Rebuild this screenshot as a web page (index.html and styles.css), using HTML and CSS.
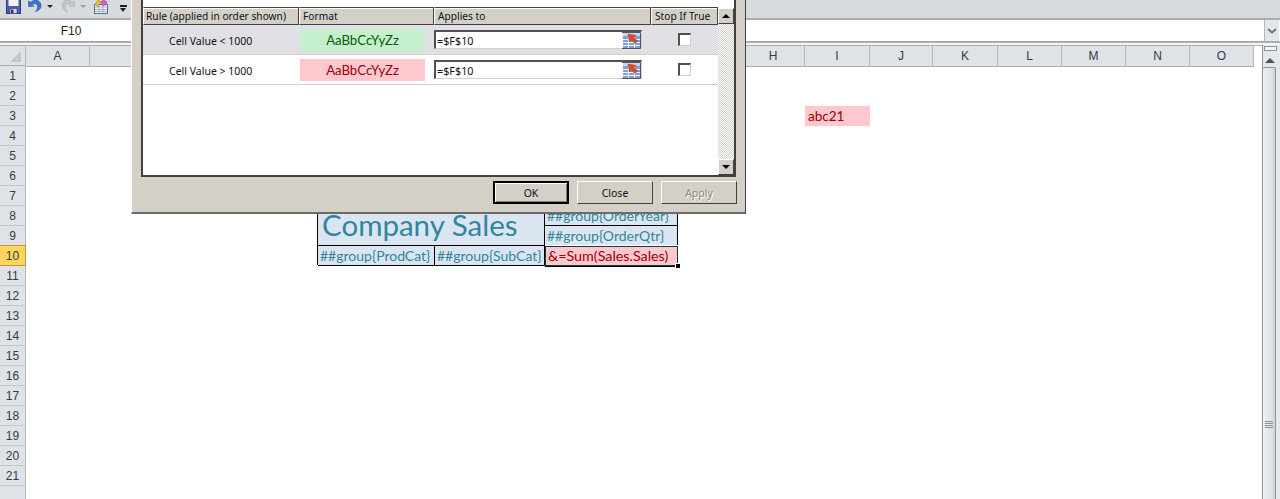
FILE: index.html
```html
<!DOCTYPE html>
<html lang="en">
<head>
    <meta charset="UTF-8">
    <title>Conditional Formatting Rules</title>
    <link rel="stylesheet" href="styles.css">
</head>
<body>
    <div class="app">
        <!-- Quick access toolbar -->
        <div class="toolbar">
            <svg class="qa-save" width="15" height="14" viewBox="0 0 15 14">
                <rect x="0.5" y="-2" width="14" height="15.5" fill="#4a5fb0" stroke="#2b3a80"/>
                <rect x="2.500" y="-2" width="10" height="8" fill="#f2f4fa"/>
                <rect x="4" y="8.500" width="7" height="5" fill="#d5d9e3" stroke="#333d70" stroke-width="0.6"/>
                <rect x="5" y="9.500" width="2.500" height="3.500" fill="#2f3768"/>
            </svg>
            <svg class="qa-undo" width="14" height="12" viewBox="0 0 14 12">
                <path d="M0.500 1v5.500h5.500L4.200 4.700C6 3.200 8.600 3.400 9.400 5.600 10 7.600 9.200 9.600 7.400 11.500c3.800-.6 6-3.400 5.600-6.700C12.400 1.400 9-.8 5.600.4 4.600.7 3.600 1.400 2.800 2.200Z" fill="#3b74cc" stroke="#25468c" stroke-width="0.5"/>
            </svg>
            <span class="qa-drop"></span>
            <svg class="qa-redo" width="14" height="12" viewBox="0 0 14 12">
                <path d="M13.500 1v5.500H8l1.800-1.800C8 3.200 5.400 3.400 4.600 5.600 4 7.600 4.800 9.600 6.600 11.500 2.800 10.900.6 8.100 1 4.800 1.600 1.400 5-.8 8.400.4c1 .3 2 1 2.800 1.800Z" fill="#c3c6cb" stroke="#a3a6ac" stroke-width="0.5"/>
            </svg>
            <span class="qa-drop qa-drop-off"></span>
            <svg class="qa-form" width="16" height="14" viewBox="0 0 16 14">
                <rect x="1.500" y="4.500" width="13" height="9" fill="#f4f6fa" stroke="#5d6f94"/>
                <path d="M2 7h12M2 9.500h12M2 11.500h12M6 5v8M10 5v8" stroke="#8ea2c8" stroke-width="0.8"/>
                <path d="M5 0l3 2-3 5-3-3Z" fill="#e8b732" stroke="#a57f20" stroke-width="0.5"/>
                <path d="M8 1.500L11 0l3 2-1.500 3-3 .5Z" fill="#d264c0" stroke="#8f3d84" stroke-width="0.5"/>
            </svg>
            <span class="qa-more"></span>
        </div>

        <!-- Name box and formula bar -->
        <div class="formula-bar">
            <div class="name-box">F10</div>
            <div class="formula-input"></div>
            <div class="formula-drop">
                <svg width="10" height="6" viewBox="0 0 10 6"><path d="M1 1l4 3.500L9 1" fill="none" stroke="#6d7178" stroke-width="2"/></svg>
            </div>
        </div>
        <div class="bar-gap"></div>

        <div class="workspace">
            <div class="sheet">
                <div class="corner"><span class="corner-mark"></span></div>
                <div class="col-heads">
                    <div class="col-head">A</div>
                    <div class="col-head">B</div>
                    <div class="col-head">C</div>
                    <div class="col-head">D</div>
                    <div class="col-head">E</div>
                    <div class="col-head">F</div>
                    <div class="col-head">G</div>
                    <div class="col-head">H</div>
                    <div class="col-head">I</div>
                    <div class="col-head">J</div>
                    <div class="col-head">K</div>
                    <div class="col-head">L</div>
                    <div class="col-head">M</div>
                    <div class="col-head">N</div>
                    <div class="col-head">O</div>
                </div>
                <div class="row-heads">
                    <div class="row-head">1</div>
                    <div class="row-head">2</div>
                    <div class="row-head">3</div>
                    <div class="row-head">4</div>
                    <div class="row-head">5</div>
                    <div class="row-head">6</div>
                    <div class="row-head">7</div>
                    <div class="row-head">8</div>
                    <div class="row-head">9</div>
                    <div class="row-head row-head-active">10</div>
                    <div class="row-head">11</div>
                    <div class="row-head">12</div>
                    <div class="row-head">13</div>
                    <div class="row-head">14</div>
                    <div class="row-head">15</div>
                    <div class="row-head">16</div>
                    <div class="row-head">17</div>
                    <div class="row-head">18</div>
                    <div class="row-head">19</div>
                    <div class="row-head">20</div>
                    <div class="row-head">21</div>
                    <div class="row-head"></div>
                </div>
                <div class="cells">
                    <div class="cell cell-abc">abc21</div>
                    <div class="cell report cell-title">Company Sales</div>
                    <div class="cell report cell-year">##group{OrderYear}</div>
                    <div class="cell report cell-qtr">##group{OrderQtr}</div>
                    <div class="cell report cell-prod">##group{ProdCat}</div>
                    <div class="cell report cell-sub">##group{SubCat}</div>
                    <div class="cell cell-sum">&amp;=Sum(Sales.Sales)<span class="fill-handle"></span></div>
                </div>
            </div>

            <div class="vscroll">
                <div class="split-box"><span></span></div>
                <div class="vscroll-up"></div>
                <div class="vscroll-thumb">
                    <div class="grip"></div>
                </div>
            </div>
        </div>

        <!-- Conditional formatting rules dialog -->
        <div class="dialog">
            <div class="rule-list">
                <div class="rule-main">
                    <div class="rule-head">
                        <div class="rule-th">Rule (applied in order shown)</div>
                        <div class="rule-th">Format</div>
                        <div class="rule-th">Applies to</div>
                        <div class="rule-th">Stop If True</div>
                    </div>
                    <div class="rule-row rule-row-on">
                        <div class="rule-name">Cell Value &lt; 1000</div>
                        <div class="rule-format"><span class="swatch swatch-good">AaBbCcYyZz</span></div>
                        <div class="rule-range">
                            <div class="range-box">
                                <span class="range-text">=$F$10</span>
                                <span class="range-btn">
                                    <svg width="19" height="17" viewBox="0 0 19 17">
                                        <rect x="1" y="1" width="17" height="15" fill="#7fa0d6"/>
                                        <rect x="1" y="1" width="17" height="3" fill="#c8d8ee"/>
                                        <path d="M1 7.500h17M1 10.500h17M1 13.500h17M6.500 4v12M12.500 4v12" stroke="#f2f6fc"/>
                                        <path d="M0 .5h18.500v16H0" fill="none" stroke="#555555"/>
                                        <path d="M6 2l8 1.500-2 2 3.500 3.500-2.500 2.500L9.500 8l-2 2Z" fill="#dc4a26" stroke="#a12c16" stroke-width="0.5"/>
                                    </svg>
                                </span>
                            </div>
                        </div>
                        <div class="rule-stop"><span class="check"></span></div>
                    </div>
                    <div class="rule-row">
                        <div class="rule-name">Cell Value &gt; 1000</div>
                        <div class="rule-format"><span class="swatch swatch-bad">AaBbCcYyZz</span></div>
                        <div class="rule-range">
                            <div class="range-box">
                                <span class="range-text">=$F$10</span>
                                <span class="range-btn">
                                    <svg width="19" height="17" viewBox="0 0 19 17">
                                        <rect x="1" y="1" width="17" height="15" fill="#7fa0d6"/>
                                        <rect x="1" y="1" width="17" height="3" fill="#c8d8ee"/>
                                        <path d="M1 7.500h17M1 10.500h17M1 13.500h17M6.500 4v12M12.500 4v12" stroke="#f2f6fc"/>
                                        <path d="M0 .5h18.500v16H0" fill="none" stroke="#555555"/>
                                        <path d="M6 2l8 1.500-2 2 3.500 3.500-2.500 2.500L9.500 8l-2 2Z" fill="#dc4a26" stroke="#a12c16" stroke-width="0.5"/>
                                    </svg>
                                </span>
                            </div>
                        </div>
                        <div class="rule-stop"><span class="check"></span></div>
                    </div>
                </div>
                <div class="rule-scroll">
                    <div class="rule-scroll-btn"><span class="arrow-up"></span></div>
                    <div class="rule-scroll-track"></div>
                    <div class="rule-scroll-btn"><span class="arrow-down"></span></div>
                </div>
            </div>
            <div class="dialog-buttons">
                <button class="dlg-btn dlg-btn-default">OK</button>
                <button class="dlg-btn">Close</button>
                <button class="dlg-btn dlg-btn-off">Apply</button>
            </div>
        </div>
    </div>
</body>
</html>
```

FILE: styles.css
```css
/* Page */
html, body {
    margin: 0;
    padding: 0;
    height: 100%;
    overflow: hidden;
}

.app {
    position: relative;
    display: flex;
    flex-direction: column;
    height: 499px;
    overflow: hidden;
    background-color: #ffffff;
    font-family: "Lato", sans-serif;
}

/* Quick access toolbar */
.toolbar {
    display: flex;
    align-items: flex-start;
    flex: none;
    height: 20px;
    box-sizing: border-box;
    padding-left: 6px;
    background-color: #d7dadf;
    border-bottom: 2px solid #a9adb3;
    overflow: hidden;
}

.qa-undo { margin-left: 7px; }
.qa-redo { margin-left: 8px; }
.qa-form { margin-left: 7px; }

.qa-drop {
    width: 0;
    height: 0;
    margin: 5px 0 0 5px;
    border-left: 3px solid transparent;
    border-right: 3px solid transparent;
    border-top: 3px solid #1f1f1f;
}

.qa-drop-off { border-top-color: #9a9da3; }

.qa-more {
    width: 7px;
    height: 2px;
    margin: 5px 0 0 11px;
    position: relative;
    background-color: #1f1f1f;
}

.qa-more::after {
    content: "";
    position: absolute;
    left: 0;
    top: 3px;
    border-left: 3.500px solid transparent;
    border-right: 3.500px solid transparent;
    border-top: 4px solid #1f1f1f;
}

/* Formula bar */
.formula-bar {
    display: flex;
    flex: none;
    height: 23px;
    box-sizing: border-box;
    background-color: #ffffff;
    border-bottom: 2px solid #a9adb3;
}

.name-box {
    width: 142px;
    text-align: center;
    font-family: "Liberation Sans", Arial, sans-serif;
    font-size: 12px;
    line-height: 22px;
    color: #222222;
}

.formula-input {
    flex: 1;
}

.formula-drop {
    display: flex;
    align-items: center;
    justify-content: center;
    width: 14px;
    margin-right: 1px;
    background-color: #e3e6ea;
    border-left: 1px solid #b4b7bc;
}

.bar-gap {
    flex: none;
    height: 2px;
    background-color: #f4f5f6;
}

/* Worksheet */
.workspace {
    display: flex;
    flex: 1;
    min-height: 0;
}

.sheet {
    display: grid;
    grid-template-columns: 26px 1fr;
    grid-template-rows: 20px 1fr;
    flex: 1;
    min-width: 0;
    overflow: hidden;
    border-top: 1px solid #a9adb3;
}

.corner {
    position: relative;
    background-color: #dfe3e8;
    border-right: 1px solid #b5b8bd;
    border-bottom: 1px solid #a9adb3;
    box-sizing: border-box;
}

.corner-mark {
    position: absolute;
    right: 4px;
    bottom: 3px;
    border-left: 11px solid transparent;
    border-bottom: 11px solid #c3c6cb;
}

.col-heads, .cells {
    display: grid;
    grid-template-columns: 64px 164px 64px 117px 110px 133px 64px 63px 65px 63px 65px 64px 64px 64px 64px 8px;
}

.col-head {
    background-color: #dfe3e8;
    border-right: 1px solid #b5b8bd;
    border-bottom: 1px solid #a9adb3;
    box-sizing: border-box;
    text-align: center;
    font-family: "Liberation Sans", Arial, sans-serif;
    font-size: 12px;
    line-height: 20px;
    color: #333b47;
}

.row-head {
    height: 20px;
    box-sizing: border-box;
    background-color: #dfe3e8;
    border-right: 1px solid #b5b8bd;
    border-bottom: 1px solid #c3c6cb;
    text-align: center;
    font-family: "Liberation Sans", Arial, sans-serif;
    font-size: 12px;
    line-height: 21px;
    color: #333b47;
}

.row-head-active {
    background-color: #ffd55f;
    border-right-color: #c29a2c;
    border-bottom-color: #c29a2c;
    box-shadow: 0 -1px 0 #c29a2c;
    position: relative;
}

.cells {
    grid-template-rows: repeat(22, 20px);
}

.cell {
    box-sizing: border-box;
    padding-left: 2px;
    font-size: 14px;
    line-height: 20px;
    white-space: nowrap;
}

.report {
    background-color: #dbe5f1;
    color: #31859c;
    border-right: 1px solid #000000;
    border-bottom: 1px solid #000000;
    box-shadow: -1px -1px 0 #000000;
}

.cell-abc {
    grid-column: 9;
    grid-row: 3;
    background-color: #ffc7ce;
    color: #9c0006;
    padding-left: 3px;
    font-size: 13.500px;
}

.cell-title {
    grid-column: 4 / 6;
    grid-row: 8 / 10;
    padding-left: 4px;
    font-size: 29.500px;
    line-height: 37px;
}

.cell-year { grid-column: 6; grid-row: 8; }
.cell-qtr { grid-column: 6; grid-row: 9; }
.cell-prod { grid-column: 4; grid-row: 10; }
.cell-sub { grid-column: 5; grid-row: 10; }

.cell-sum {
    grid-column: 6;
    grid-row: 10;
    position: relative;
    background-color: #ffc7ce;
    color: #9c0006;
    padding-left: 2px;
    font-size: 14.300px;
    line-height: 18px;
    border: 1px solid #123f33;
    box-shadow: -1px 0 0 #000000, 0 1px 0 #000000, 0 -1px 0 #ffffff, 1px 0 0 #ffffff;
}

.fill-handle {
    position: absolute;
    right: -3px;
    bottom: -3px;
    width: 5px;
    height: 5px;
    background-color: #000000;
    border-left: 1px solid #ffffff;
    border-top: 1px solid #ffffff;
    box-sizing: border-box;
}

/* Sheet scrollbar */
.vscroll {
    display: flex;
    flex-direction: column;
    flex: none;
    width: 18px;
    margin-left: -2px;
    background-color: #e4e7ec;
    border-left: 1px solid #8f9399;
    box-sizing: border-box;
    position: relative;
}

.split-box {
    height: 6px;
    flex: none;
    padding: 1px 2px 0 1px;
}

.split-box span {
    display: block;
    width: 11px;
    height: 3px;
    background-color: #f3f4f6;
    border: 1px solid #8f9399;
}

.vscroll-up {
    flex: none;
    height: 15px;
    position: relative;
}

.vscroll-up::after {
    content: "";
    position: absolute;
    left: 2px;
    top: 6px;
    border-left: 5px solid transparent;
    border-right: 5px solid transparent;
    border-bottom: 5px solid #4f535a;
}

.vscroll-thumb {
    flex: 1;
    width: 13px;
    box-sizing: border-box;
    border-right: 1px solid #8f9399;
    border-top: 1px solid #8f9399;
    border-radius: 2px 2px 0 0;
    background: linear-gradient(to right, #eef0f4, #dfe2e8 70%, #cfd2d9);
    position: relative;
}

.grip {
    position: absolute;
    left: 2px;
    top: 353px;
    width: 8px;
    height: 7px;
    background: repeating-linear-gradient(to bottom, #8d9096 0 1px, transparent 1px 2px);
}

/* Dialog */
.dialog {
    position: absolute;
    left: 131px;
    top: 0;
    width: 615px;
    height: 214px;
    box-sizing: border-box;
    padding-left: 9px;
    background-color: #d4d0c8;
    border-left: 1px solid #ffffff;
    border-right: 1px solid #404040;
    border-bottom: 2px solid #6b6b6b;
    font-family: "Noto Sans", "Liberation Sans", sans-serif;
    font-size: 10.500px;
    color: #101020;
}

.rule-list {
    display: flex;
    width: 595px;
    height: 177px;
    box-sizing: border-box;
    padding-top: 7px;
    background-color: #ffffff;
    border-left: 2px solid #404040;
    border-right: 2px solid #404040;
    border-bottom: 2px solid #404040;
}

.rule-main {
    flex: 1;
}

.rule-head, .rule-row {
    display: grid;
    grid-template-columns: 156px 135px 217px 67px;
}

.rule-head {
    height: 18px;
}

.rule-th {
    box-sizing: border-box;
    padding-left: 3px;
    background-color: #d4d0c8;
    border: 1px solid #404040;
    border-left: 1px solid #ffffff;
    box-shadow: inset 0 1px 0 #ffffff;
    font-size: 10.200px;
    line-height: 17px;
    white-space: nowrap;
    overflow: hidden;
}

.rule-th:first-child {
    padding-left: 2px;
}

.rule-row {
    height: 30px;
    box-sizing: border-box;
    align-items: center;
    border-bottom: 1px solid #d4d0c8;
}

.rule-row-on {
    background-color: #e0dfe3;
}

.rule-name {
    padding: 2px 0 0 26px;
}

.rule-format {
    padding-left: 1px;
}

.swatch {
    display: block;
    width: 125px;
    height: 22px;
    text-align: center;
    font-family: "Lato", sans-serif;
    font-size: 13.200px;
    line-height: 23px;
}

.swatch-good {
    background-color: #c6efce;
    color: #006100;
}

.swatch-bad {
    background-color: #ffc7ce;
    color: #9c0006;
}

.range-box {
    display: flex;
    justify-content: space-between;
    width: 208px;
    height: 19px;
    box-sizing: border-box;
    background-color: #ffffff;
    border: 1px solid #d4d0c8;
    border-top: 2px solid #505050;
    border-left: 2px solid #505050;
}

.range-text {
    padding-left: 1px;
    font-size: 10.800px;
    line-height: 18px;
}

.range-btn {
    display: flex;
    height: 17px;
}

.rule-stop {
    display: flex;
    justify-content: center;
    padding-right: 1px;
}

.check {
    width: 13px;
    height: 13px;
    box-sizing: border-box;
    background-color: #ffffff;
    border: 1px solid #d4d0c8;
    border-top: 2px solid #505050;
    border-left: 2px solid #505050;
}

/* Dialog list scrollbar */
.rule-scroll {
    display: flex;
    flex-direction: column;
    width: 16px;
    height: 167px;
    margin-top: 1px;
}

.rule-scroll-btn {
    display: flex;
    align-items: center;
    justify-content: center;
    flex: none;
    height: 16px;
    box-sizing: border-box;
    background-color: #d4d0c8;
    border: 1px solid #404040;
    border-top-color: #ffffff;
    border-left-color: #ffffff;
}

.rule-scroll-track {
    flex: 1;
    background: repeating-conic-gradient(#d4d0c8 0 25%, #ffffff 0 50%) 0 0 / 2px 2px;
}

.arrow-up {
    border-left: 4px solid transparent;
    border-right: 4px solid transparent;
    border-bottom: 4px solid #000000;
}

.arrow-down {
    border-left: 4px solid transparent;
    border-right: 4px solid transparent;
    border-top: 4px solid #000000;
}

/* Dialog buttons */
.dialog-buttons {
    display: flex;
    justify-content: flex-end;
    gap: 8px;
    width: 596px;
    padding-top: 4px;
}

.dlg-btn {
    width: 76px;
    height: 23px;
    padding: 0;
    box-sizing: border-box;
    background-color: #d4d0c8;
    border: 1px solid #404040;
    border-top-color: #ffffff;
    border-left-color: #ffffff;
    font-family: "Noto Sans", "Liberation Sans", sans-serif;
    font-size: 10.500px;
    color: #101020;
}

.dlg-btn-default {
    border: 2px solid #000000;
    box-shadow: inset 1px 1px 0 #ffffff, inset -1px -1px 0 #808080;
}

.dlg-btn-off {
    color: #8c8a84;
    text-shadow: 1px 1px 0 #ffffff;
}
```
